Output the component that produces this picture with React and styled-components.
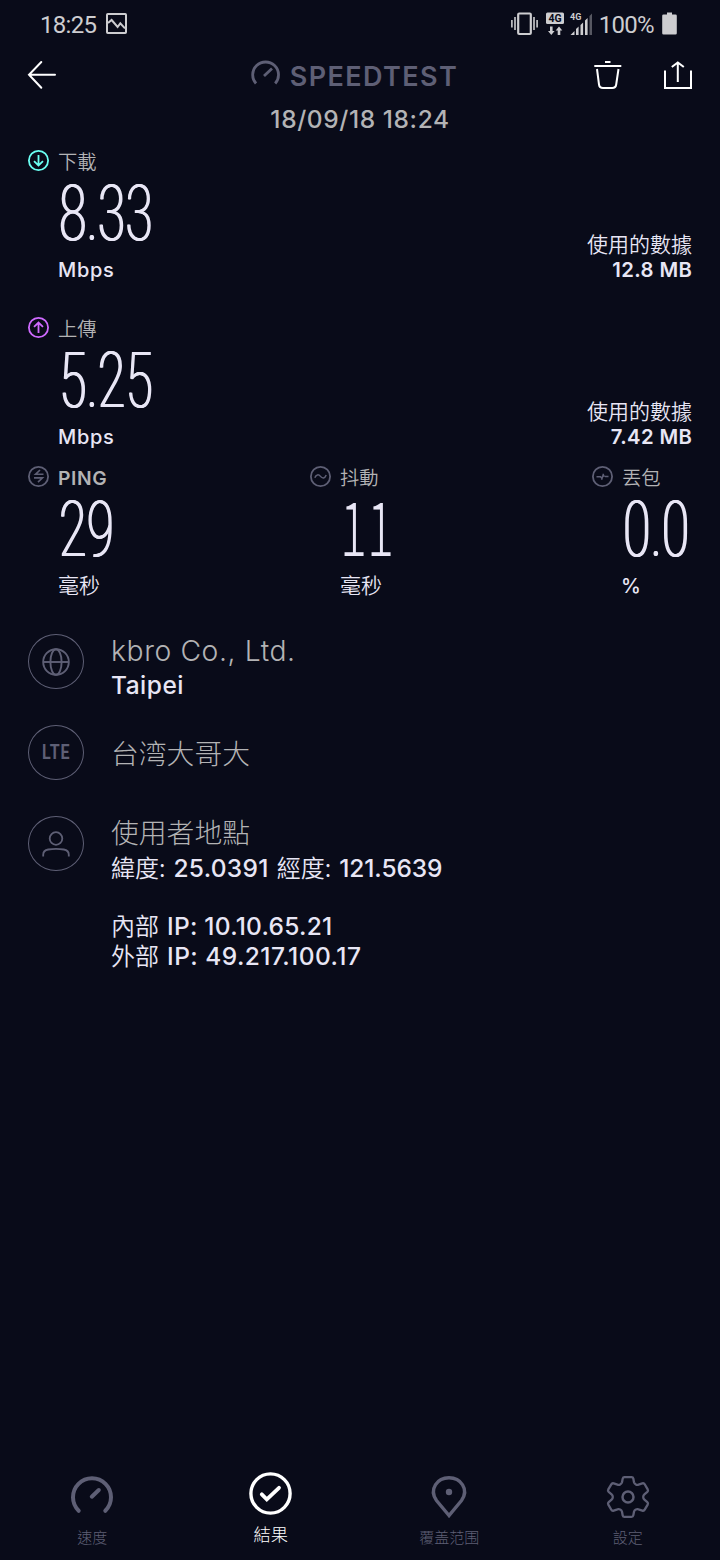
import React from "react";
import styled, { createGlobalStyle } from "styled-components";

const color = {
  bg: "#090b19",
  text: "#e8e6f5",
  soft: "#b3b3b5",
  muted: "#5e5f75",
  status: "#cdcdd0",
  down: "#6afff3",
  up: "#cf6aff",
};

const GlobalStyle = createGlobalStyle`
  * { box-sizing: border-box; }
  body { margin: 0; background: ${color.bg}; }
  svg { display: block; flex: none; overflow: visible; }
`;

const latin = `Inter, "Noto Sans CJK TC", sans-serif`;
const han = `"Noto Sans CJK TC", sans-serif`;

const Screen = styled.div`
  width: 720px;
  height: 1560px;
  display: flex;
  flex-direction: column;
  background: ${color.bg};
  color: ${color.text};
  font-family: ${latin};
  overflow: hidden;
`;

const StatusBar = styled.div`
  height: 48px;
  display: flex;
  align-items: center;
  padding: 0 43px 0 40px;
  color: ${color.status};
  font: 400 24px/48px Roboto, sans-serif;
`;

const StatusText = styled.span`
  letter-spacing: -0.7px;
  height: 48px;
  line-height: 50px;
  margin-left: ${(p) => p.$before || 0}px;
`;

const StatusIcons = styled.div`
  margin-left: auto;
  display: flex;
  align-items: center;
`;

const Header = styled.header`
  height: 54px;
  display: flex;
  justify-content: space-between;
  align-items: center;
  padding: 0 28px;
`;

const HeaderSide = styled.div`
  width: 100px;
  display: flex;
  justify-content: ${(p) => (p.$end ? "flex-end" : "flex-start")};
  gap: 42px;
`;

const Brand = styled.div`
  display: flex;
  align-items: center;
  gap: 10px;
  padding-right: 11px;
  color: ${color.muted};
`;

const BrandName = styled.span`
  font-size: 27px;
  line-height: 32px;
  font-weight: 600;
  letter-spacing: 1.4px;
  padding-top: 4px;
`;

const DateLine = styled.div`
  height: 32px;
  padding-top: 1px;
  text-align: center;
  color: ${color.soft};
  font-size: 24.5px;
  line-height: 32px;
  font-weight: 500;
  letter-spacing: 0.6px;
`;

const Speed = styled.section`
  height: 167px;
  padding: 13px 28px 0;
  display: flex;
  justify-content: space-between;
`;

const Reading = styled.div`
  width: ${(p) => p.$width || "140px"};
`;

const LabelRow = styled.div`
  height: 28px;
  display: flex;
  align-items: center;
  gap: 9px;
`;

const Label = styled.span`
  color: ${color.soft};
  font-family: ${(p) => (p.$latin ? latin : han)};
  font-size: 19.3px;
  line-height: 28px;
  font-weight: ${(p) => (p.$latin ? 600 : 350)};
  letter-spacing: ${(p) => (p.$latin ? "0.6px" : 0)};
  padding-top: ${(p) => (p.$latin ? "2px" : 0)};
`;

const BigNumber = styled.div`
  height: 78px;
  margin-left: ${(p) => (p.$footed ? "30px" : "31px")};
  white-space: nowrap;
  font-family: ${(p) => (p.$footed ? han : "Roboto, sans-serif")};
  font-weight: 200;
  font-size: ${(p) => (p.$footed ? "75px" : "77px")};
  line-height: ${(p) => (p.$footed ? "65px" : "78px")};
  transform: scaleX(${(p) => (p.$footed ? 0.67 : 0.65)});
  transform-origin: left center;
  text-shadow: ${(p) => (p.$footed ? "none" : "1px 0 currentColor, -1px 0 currentColor")};
`;

const Unit = styled.div`
  margin-left: ${(p) => (p.$percent ? "29px" : "30px")};
  height: 32px;
  font-family: ${(p) => (p.$han ? han : latin)};
  font-size: ${(p) => (p.$han ? "21px" : "20px")};
  line-height: ${(p) => (p.$han ? "30px" : "34px")};
  font-weight: ${(p) => (p.$han ? 350 : 500)};
  letter-spacing: ${(p) => (p.$han ? 0 : "0.7px")};
`;

const DataUsed = styled.div`
  padding-top: 83px;
  text-align: right;
`;

const DataCaption = styled.div`
  font-family: ${han};
  font-size: 21px;
  line-height: 26px;
  font-weight: 350;
  margin-bottom: 1px;
`;

const DataValue = styled.div`
  font-size: 20.3px;
  line-height: 26px;
  font-weight: 600;
  letter-spacing: 0.4px;
  margin-right: -0.4px;
`;

const Metrics = styled.section`
  height: 157px;
  padding: 0 28px;
  margin-top: -5px;
  display: flex;
  justify-content: space-between;
`;

const Details = styled.section`
  padding: 14px 28px 0;
`;

const Detail = styled.div`
  min-height: 91px;
  display: flex;
  gap: 27px;
`;

const Badge = styled.div`
  width: 56px;
  height: 55px;
  flex: none;
  display: flex;
  align-items: center;
  justify-content: center;
  border: 1.3px solid ${color.muted};
  border-radius: 50%;
  color: ${color.muted};
`;

const BadgeText = styled.span`
  font-family: Roboto, sans-serif;
  font-size: 19.5px;
  font-weight: 700;
  letter-spacing: 1px;
  transform: scaleX(0.82);
`;

const DetailText = styled.div`
  padding-top: ${(p) => p.$top || 0}px;
`;

const Title = styled.div`
  color: ${color.soft};
  font-family: ${(p) => (p.$han ? han : latin)};
  font-size: ${(p) => (p.$han ? "27.8px" : "28.3px")};
  line-height: ${(p) => (p.$han ? "31px" : "35px")};
  margin-bottom: ${(p) => (p.$han ? "4px" : "-1px")};
  font-weight: 300;
  letter-spacing: ${(p) => (p.$han ? 0 : "0.6px")};
`;

const Line = styled.div`
  display: flex;
  gap: 8px;
  font-size: 24.5px;
  line-height: ${(p) => p.$height || 35}px;
  font-weight: 500;
  white-space: nowrap;
`;

const Han = styled.span`
  font-family: ${han};
  font-size: 24px;
  font-weight: 350;
  margin-top: -2px;
`;

const Value = styled.span`
  letter-spacing: ${(p) => p.$spacing || 0}px;
`;

const IpBlock = styled.div`
  margin-top: 26px;
`;

const Nav = styled.nav`
  margin-top: auto;
  height: 96px;
  padding: 0 3px;
  display: grid;
  grid-template-columns: repeat(4, 1fr);
`;

const NavItem = styled.div`
  display: flex;
  flex-direction: column;
  align-items: center;
  padding-top: ${(p) => (p.$active ? 8 : 12)}px;
  color: ${(p) => (p.$active ? "#fff" : color.muted)};
  font-family: ${han};
  font-size: ${(p) => (p.$active ? 17.3 : 15)}px;
  line-height: ${(p) => (p.$active ? 38 : 38)}px;
  font-weight: 300;
`;

const Svg = ({ w, h, stroke = 2, children, ...rest }) => (
  <svg width={w} height={h} viewBox={`0 0 ${w} ${h}`} fill="none" stroke="currentColor" strokeWidth={stroke} {...rest}>
    {children}
  </svg>
);

const IconSlot = styled.span`
  margin-left: ${(p) => p.$before || 0}px;
  margin-top: ${(p) => p.$lift || 0}px;
`;

const PictureIcon = () => (
  <Svg w={21} h={21}>
    <rect x="1" y="1" width="19" height="19" rx="0.8" />
    <path d="M2 10l3.600-3 6 7 2.700-3.600 4.700 5" />
  </Svg>
);

const VibrateIcon = () => (
  <Svg w={27} h={24}>
    <rect x="7.200" y="1.500" width="12.600" height="20.500" rx="1" strokeWidth="2.200" />
    <path d="M4 5v13M23 5v13M.9 8v7.500M26.100 8v7.500" strokeWidth="1.600" />
  </Svg>
);

const DataIcon = () => (
  <Svg w={18} h={24} stroke={0}>
    <rect x="0" y="0.500" width="18" height="11.500" rx="1.500" fill="currentColor" />
    <text x="9" y="10" textAnchor="middle" fontFamily="Roboto, sans-serif" fontWeight="700" fontSize="10.500" fill={color.bg}>4G</text>
    <path d="M4 14.500h2.600v4.500h2l-3.300 4-3.300-4h2zM11.700 23h2.600v-4.500h2l-3.300-4-3.300 4h2z" fill="currentColor" />
  </Svg>
);

const SignalIcon = () => (
  <Svg w={23} h={24} stroke={0}>
    <text x="0" y="7.500" fontFamily="Roboto, sans-serif" fontWeight="700" fontSize="9" fill="currentColor">4G</text>
    <path d="M.5 23l4-4v4zM6 23v-6l2.600-2.600V23zM10.500 23V13l2.600-2.600V23zM15 23V8.500l2.600-2.600V23z" fill="currentColor" />
    <path d="M19.500 23V4L22 1.500V23z" fill="currentColor" opacity="0.400" />
  </Svg>
);

const BatteryIcon = () => (
  <Svg w={15} h={23} stroke={0}>
    <path d="M5 .5h5v2h3.500q1.300 0 1.300 1.300v17.400q0 1.300-1.300 1.300h-12q-1.300 0-1.300-1.300V3.800q0-1.300 1.300-1.300H5z" fill="currentColor" />
  </Svg>
);

const BackIcon = () => (
  <Svg w={28} h={28} color="#fff" strokeLinecap="round">
    <path d="M1 13.700h26M13.300 1L1 13.700l12.300 13" />
  </Svg>
);

const TrashIcon = () => (
  <Svg w={28} h={28} color="#fff">
    <path d="M11 1h5.500M.3 5h27" />
    <path d="M3 8l2 15.500q.5 3.500 4 3.500h9.200q3.500 0 4-3.500L24.500 8" />
  </Svg>
);

const ShareIcon = () => (
  <Svg w={28} h={28} color="#fff">
    <path d="M1 9.500V27h26V9.500M13.800 21V1.500M7.800 6l6-4.600 6 4.600" />
  </Svg>
);

const BrandGauge = () => (
  <Svg w={29} h={26} stroke={2.800}>
    <path d="M5 23.500A12.900 12.900 0 1 1 24.200 23.500M13 16l8-7.500" />
  </Svg>
);

const Ring = ({ tint, children }) => (
  <IconSlot $lift={-1.5}>
    <Svg w={21} h={21} stroke={1.800} color={tint}>
      <circle cx="10.500" cy="10.500" r="9.600" />
      {children}
    </Svg>
  </IconSlot>
);

const DownArrow = () => <path d="M10.500 5v10.500M6 11.200l4.500 4.300 4.500-4.300" />;
const UpArrow = () => <path d="M10.500 16V5.500M6 9.800l4.500-4.300L15 9.800" />;
const PingMark = () => <path d="M12 4L7.500 8.300h8M6 11.900h8.500L10 16.200" strokeWidth="1.600" />;
const JitterMark = () => <path d="M4.800 11.800c1.300-3.800 4-3.500 5.700-1.400s4.400 2.400 5.700-1.300" strokeWidth="1.500" />;
const LossMark = () => <path d="M4.500 10.800h4l1.300 1.500M9.600 13.800l1.900-6M11 8.800l1.500 1.900M13 10.600h3.500" strokeWidth="1.500" />;

const GlobeIcon = () => (
  <Svg w={28} h={28} stroke={1.900}>
    <circle cx="14" cy="14" r="12.800" />
    <ellipse cx="14" cy="14" rx="5.600" ry="12.800" />
    <path d="M1 14h26" />
  </Svg>
);

const PersonIcon = () => (
  <Svg w={28} h={28} stroke={1.800}>
    <circle cx="14" cy="8.500" r="6.300" />
    <path d="M1.200 26.500v-1.800q0-4.200 5-5.200 7.800-1.400 15.600 0 5 1 5 5.200v1.800" />
  </Svg>
);

const GaugeIcon = () => (
  <Svg w={42} h={42} stroke={4} strokeLinecap="round">
    <path d="M7.700 34.800A19 19 0 1 1 34.300 34.800M20.800 20.700l7-6.700" />
  </Svg>
);

const CheckIcon = () => (
  <Svg w={43} h={43} stroke={3.400} strokeLinecap="round">
    <circle cx="21.500" cy="21.500" r="19.600" />
    <path d="M12.800 22.300l5 5L30 15.800" strokeWidth="3.800" />
  </Svg>
);

const PinIcon = () => (
  <Svg w={34} h={42} stroke={3.400}>
    <path d="M17 39.500L4.500 24.500C-3.500 13 5.500 1.800 17 1.800S37.500 13 29.500 24.500z" />
    <circle cx="17" cy="16" r="3.200" fill="currentColor" stroke="none" />
  </Svg>
);

const GearIcon = () => (
  <Svg w={42} h={42} stroke={2.300} strokeLinejoin="round">
    <circle cx="21" cy="21" r="5.500" strokeWidth="2.500" />
    <path d="M24.500 1.100Q26 1.100 26.300 2.600L27 6.300Q27.300 7.600 28.800 8.400Q30.200 9.200 31.500 8.700L35.300 7.400Q36.900 6.900 37.700 8.300L40.700 13.400Q41.500 14.800 40.300 15.900L37.400 18.400Q36.200 19.400 36.200 21Q36.200 22.600 37.400 23.600L40.300 26.100Q41.500 27.200 40.700 28.600L37.700 33.700Q36.900 35.100 35.300 34.600L31.500 33.300Q30.200 32.800 28.800 33.600Q27.300 34.400 27 35.700L26.300 39.400Q26 40.900 24.500 40.900H17.500Q16 40.900 15.700 39.400L15 35.700Q14.700 34.400 13.200 33.600Q11.800 32.800 10.500 33.300L6.700 34.600Q5.100 35.100 4.300 33.700L1.300 28.600Q.5 27.200 1.700 26.100L4.600 23.600Q5.800 22.600 5.800 21Q5.800 19.400 4.600 18.400L1.700 15.900Q.5 14.800 1.300 13.400L4.300 8.300Q5.100 6.900 6.700 7.400L10.500 8.700Q11.800 9.200 13.200 8.400Q14.700 7.600 15 6.300L15.700 2.600Q16 1.100 17.500 1.100Z" />
  </Svg>
);

const SpeedBlock = ({ tint, mark, label, value, used }) => (
  <Speed>
    <Reading>
      <LabelRow><Ring tint={tint}>{mark}</Ring><Label>{label}</Label></LabelRow>
      <BigNumber>{value}</BigNumber>
      <Unit>Mbps</Unit>
    </Reading>
    <DataUsed>
      <DataCaption>使用的數據</DataCaption>
      <DataValue>{used}</DataValue>
    </DataUsed>
  </Speed>
);

const Metric = ({ mark, label, latinLabel, value, footed, unit, hanUnit, width }) => (
  <Reading $width={width}>
    <LabelRow><Ring tint={color.muted}>{mark}</Ring><Label $latin={latinLabel}>{label}</Label></LabelRow>
    <BigNumber $footed={footed}>{value}</BigNumber>
    <Unit $han={hanUnit} $percent={unit === "%"}>{unit}</Unit>
  </Reading>
);

export default function App() {
  return (
    <Screen>
      <GlobalStyle />
      <StatusBar>
        <StatusText>18:25</StatusText>
        <IconSlot $before={10} $lift={-1}><PictureIcon /></IconSlot>
        <StatusIcons>
          <VibrateIcon />
          <IconSlot $before={8}><DataIcon /></IconSlot>
          <IconSlot $before={6}><SignalIcon /></IconSlot>
          <StatusText $before={6}>100%</StatusText>
          <IconSlot $before={8} $lift={-1}><BatteryIcon /></IconSlot>
        </StatusIcons>
      </StatusBar>
      <Header>
        <HeaderSide><BackIcon /></HeaderSide>
        <Brand><IconSlot $lift={-4}><BrandGauge /></IconSlot><BrandName>SPEEDTEST</BrandName></Brand>
        <HeaderSide $end><TrashIcon /><ShareIcon /></HeaderSide>
      </Header>
      <DateLine>18/09/18 18:24</DateLine>
      <SpeedBlock tint={color.down} mark={<DownArrow />} label="下載" value="8.33" used="12.8 MB" />
      <SpeedBlock tint={color.up} mark={<UpArrow />} label="上傳" value="5.25" used="7.42 MB" />
      <Metrics>
        <Metric mark={<PingMark />} label="PING" latinLabel value="29" unit="毫秒" hanUnit width="100px" />
        <Metric mark={<JitterMark />} label="抖動" value="11" footed unit="毫秒" hanUnit width="100px" />
        <Metric mark={<LossMark />} label="丟包" value="0.0" unit="%" width="100px" />
      </Metrics>
      <Details>
        <Detail>
          <Badge><GlobeIcon /></Badge>
          <DetailText>
            <Title>kbro Co., Ltd.</Title>
            <Line><Value $spacing={0.5}>Taipei</Value></Line>
          </DetailText>
        </Detail>
        <Detail>
          <Badge><BadgeText>LTE</BadgeText></Badge>
          <DetailText $top={12}><Title $han>台湾大哥大</Title></DetailText>
        </Detail>
        <Detail>
          <Badge><PersonIcon /></Badge>
          <DetailText>
            <Title $han>使用者地點</Title>
            <Line>
              <Han>緯度:</Han><Value $spacing={0.3}>25.0391</Value><Han>經度:</Han><Value $spacing={-0.1}>121.5639</Value>
            </Line>
            <IpBlock>
              <Line $height={29.5}><Han>內部</Han><Value $spacing={0.25}>IP: 10.10.65.21</Value></Line>
              <Line $height={29.5}><Han>外部</Han><Value $spacing={0.45}>IP: 49.217.100.17</Value></Line>
            </IpBlock>
          </DetailText>
        </Detail>
      </Details>
      <Nav>
        <NavItem><GaugeIcon />速度</NavItem>
        <NavItem $active><CheckIcon />結果</NavItem>
        <NavItem><PinIcon />覆盖范围</NavItem>
        <NavItem><GearIcon />設定</NavItem>
      </Nav>
    </Screen>
  );
}
